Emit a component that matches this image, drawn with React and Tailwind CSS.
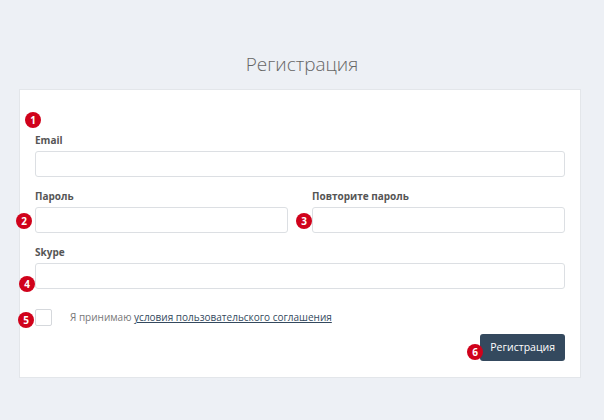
import React from "react";

const Badge = ({ n, className }) => (
  <span
    className={`absolute flex h-4 w-4 items-center justify-center rounded-full bg-[#d0021b] text-[10px] font-bold leading-none text-white ${className}`}
  >
    {n}
  </span>
);

const Field = ({ label, className = "" }) => (
  <div className={`flex flex-col gap-[3px] ${className}`}>
    <label className="text-[10px] font-bold leading-[15px] text-[#555]">{label}</label>
    <input
      type="text"
      className="h-[26px] w-full rounded-[3px] border border-[#dcdfe3] bg-white px-2 text-[12px] outline-none"
    />
  </div>
);

export default function App() {
  return (
    <div
      className="min-h-[420px] w-full bg-[#edf0f5] pt-[50px]"
      style={{ fontFamily: '"Open Sans", "Noto Sans", sans-serif' }}
    >
      {/* title */}
      <h1 className="text-center text-[19px] font-light leading-[28px] text-[#666]">Регистрация</h1>

      {/* card */}
      <div className="relative mx-[19px] mt-[11px] w-[562px] border border-[#e3e6ea] bg-white px-[15px] pb-[16px] pt-[43px]">
        <div className="flex flex-col gap-3">
          <Field label="Email" />
          <div className="flex gap-6">
            <Field label="Пароль" className="flex-1" />
            <Field label="Повторите пароль" className="flex-1" />
          </div>
          <Field label="Skype" />
        </div>

        {/* agreement */}
        <div className="mt-5 flex items-center">
          <span className="h-[17px] w-[17px] rounded-[2px] border border-[#d5d8dc] bg-white" />
          <span className="ml-[18px] text-[10px] text-[#777]">
            Я принимаю{" "}
            <a href="#" className="text-[#34495e] underline">
              условия пользовательского соглашения
            </a>
          </span>
        </div>

        <div className="mt-2 flex justify-end">
          <button className="h-[27px] rounded-[3px] bg-[#34495e] px-[10px] text-[10.5px] text-white">
            Регистрация
          </button>
        </div>

        {/* annotation badges */}
        <Badge n="1" className="left-[5px] top-[22px]" />
        <Badge n="2" className="left-[-4px] top-[123px]" />
        <Badge n="3" className="left-[276px] top-[123px]" />
        <Badge n="4" className="left-[-1px] top-[186px]" />
        <Badge n="5" className="left-[-2px] top-[222px]" />
        <Badge n="6" className="left-[447px] top-[254px]" />
      </div>
    </div>
  );
}
